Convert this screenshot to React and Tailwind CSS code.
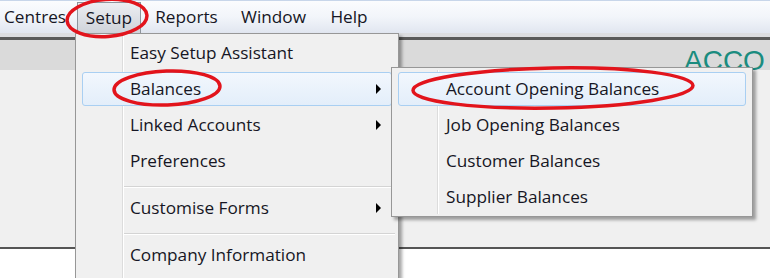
import React from 'react';

const Arrow = () => (
  <span className="block w-0 h-0 border-y-[5px] border-y-transparent border-l-[5px] border-l-black" />
);

const MenuItem = ({ label, arrow, active }) => (
  <div className={`h-[36px] ${active ? 'px-[6px] py-[1px]' : ''}`}>
    <div
      className={`relative h-full flex items-center justify-between ${
        active
          ? 'rounded-[3px] border border-[#a9cff2] bg-gradient-to-b from-[#f2f7fd] to-[#e3eefa] pl-[47px] pr-[10px]'
          : 'pl-[54px] pr-[17px]'
      }`}
    >
      <span>{label}</span>
      {arrow && <Arrow />}
    </div>
  </div>
);

const Separator = () => (
  <div className="h-[11px] pt-[7px] pl-[47px] pr-[3px]">
    <div className="border-t border-[#d4d4d4] border-b border-b-white" />
  </div>
);

export default function App() {
  const menuBar = [
    { label: 'Centres', cls: 'w-[77px] pl-[4px]' },
    { label: 'Setup', cls: 'w-[64px] justify-center', open: true },
    { label: 'Reports', cls: 'w-[91px] justify-center' },
    { label: 'Window', cls: 'w-[83px] justify-center' },
    { label: 'Help', cls: 'w-[68px] justify-center' },
  ];

  return (
    <div className="relative w-[770px] h-[278px] overflow-hidden bg-white font-['Open_Sans',sans-serif] text-[17.2px] text-[#161624] flex flex-col">
      {/* Menu bar */}
      <div className="h-[33px] shrink-0 border-t border-[#c8d6ea] bg-gradient-to-b from-[#fbfcfe] via-[#f2f5fa] to-[#e1e6f0] flex">
        {menuBar.map((m) => (
          <div
            key={m.label}
            className={`flex items-center ${m.cls} ${
              m.open
                ? 'mt-[1px] border border-b-0 border-[#8e949c] bg-gradient-to-b from-[#eceef2] to-[#cfd3da]'
                : ''
            }`}
          >
            {m.label}
          </div>
        ))}
      </div>

      {/* Window body behind the menus */}
      <div className="h-[4px] shrink-0 bg-[#dcdde0]" />
      <div className="h-[3px] shrink-0 bg-[#5a5a5a]" />
      <div className="h-[30px] shrink-0 bg-[#dadada] flex">
        <div className="ml-[684px] mt-[6px] whitespace-nowrap font-['Liberation_Sans',sans-serif] text-[28px] leading-[30px] text-[#1b8c7f]">
          ACCO
        </div>
      </div>
      <div className="h-[177px] shrink-0 bg-[#f0f0f0]" />
      <div className="h-[2px] shrink-0 bg-[#555555]" />
      <div className="flex-1 bg-white" />

      {/* Setup dropdown */}
      <div className="absolute left-[75px] top-[33px] w-[324px] h-[260px] border border-[#979797] bg-[#f0f0f0] pt-[1px] shadow-[3px_3px_3px_rgba(0,0,0,0.35)]">
        <div className="absolute left-[46px] top-0 bottom-0 w-[2px] border-l border-[#dcdcdc] border-r border-r-white" />
        <MenuItem label="Easy Setup Assistant" />
        <MenuItem label="Balances" arrow active />
        <MenuItem label="Linked Accounts" arrow />
        <MenuItem label="Preferences" />
        <Separator />
        <MenuItem label="Customise Forms" arrow />
        <Separator />
        <MenuItem label="Company Information" />
      </div>

      {/* Balances submenu */}
      <div className="absolute left-[391px] top-[67px] w-[362px] h-[150px] border border-[#979797] bg-[#f0f0f0] pt-[3px] shadow-[3px_3px_3px_rgba(0,0,0,0.35)]">
        <div className="absolute left-[45px] top-[2px] bottom-[2px] w-[2px] border-l border-[#dcdcdc] border-r border-r-white" />
        <MenuItem label="Account Opening Balances" active />
        <MenuItem label="Job Opening Balances" />
        <MenuItem label="Customer Balances" />
        <MenuItem label="Supplier Balances" />
      </div>

      {/* Red annotation rings */}
      <svg className="absolute inset-0 pointer-events-none" width="770" height="278" viewBox="0 0 770 278">
        <g fill="none" stroke="#e2141c" strokeWidth="3.5">
          <ellipse cx="107" cy="18" rx="40" ry="18.5" transform="rotate(-4 107 18)" />
          <ellipse cx="167" cy="88" rx="53" ry="17" transform="rotate(-2 167 88)" />
          <ellipse cx="553" cy="88" rx="140" ry="20" transform="rotate(-1 553 88)" />
        </g>
      </svg>
    </div>
  );
}
